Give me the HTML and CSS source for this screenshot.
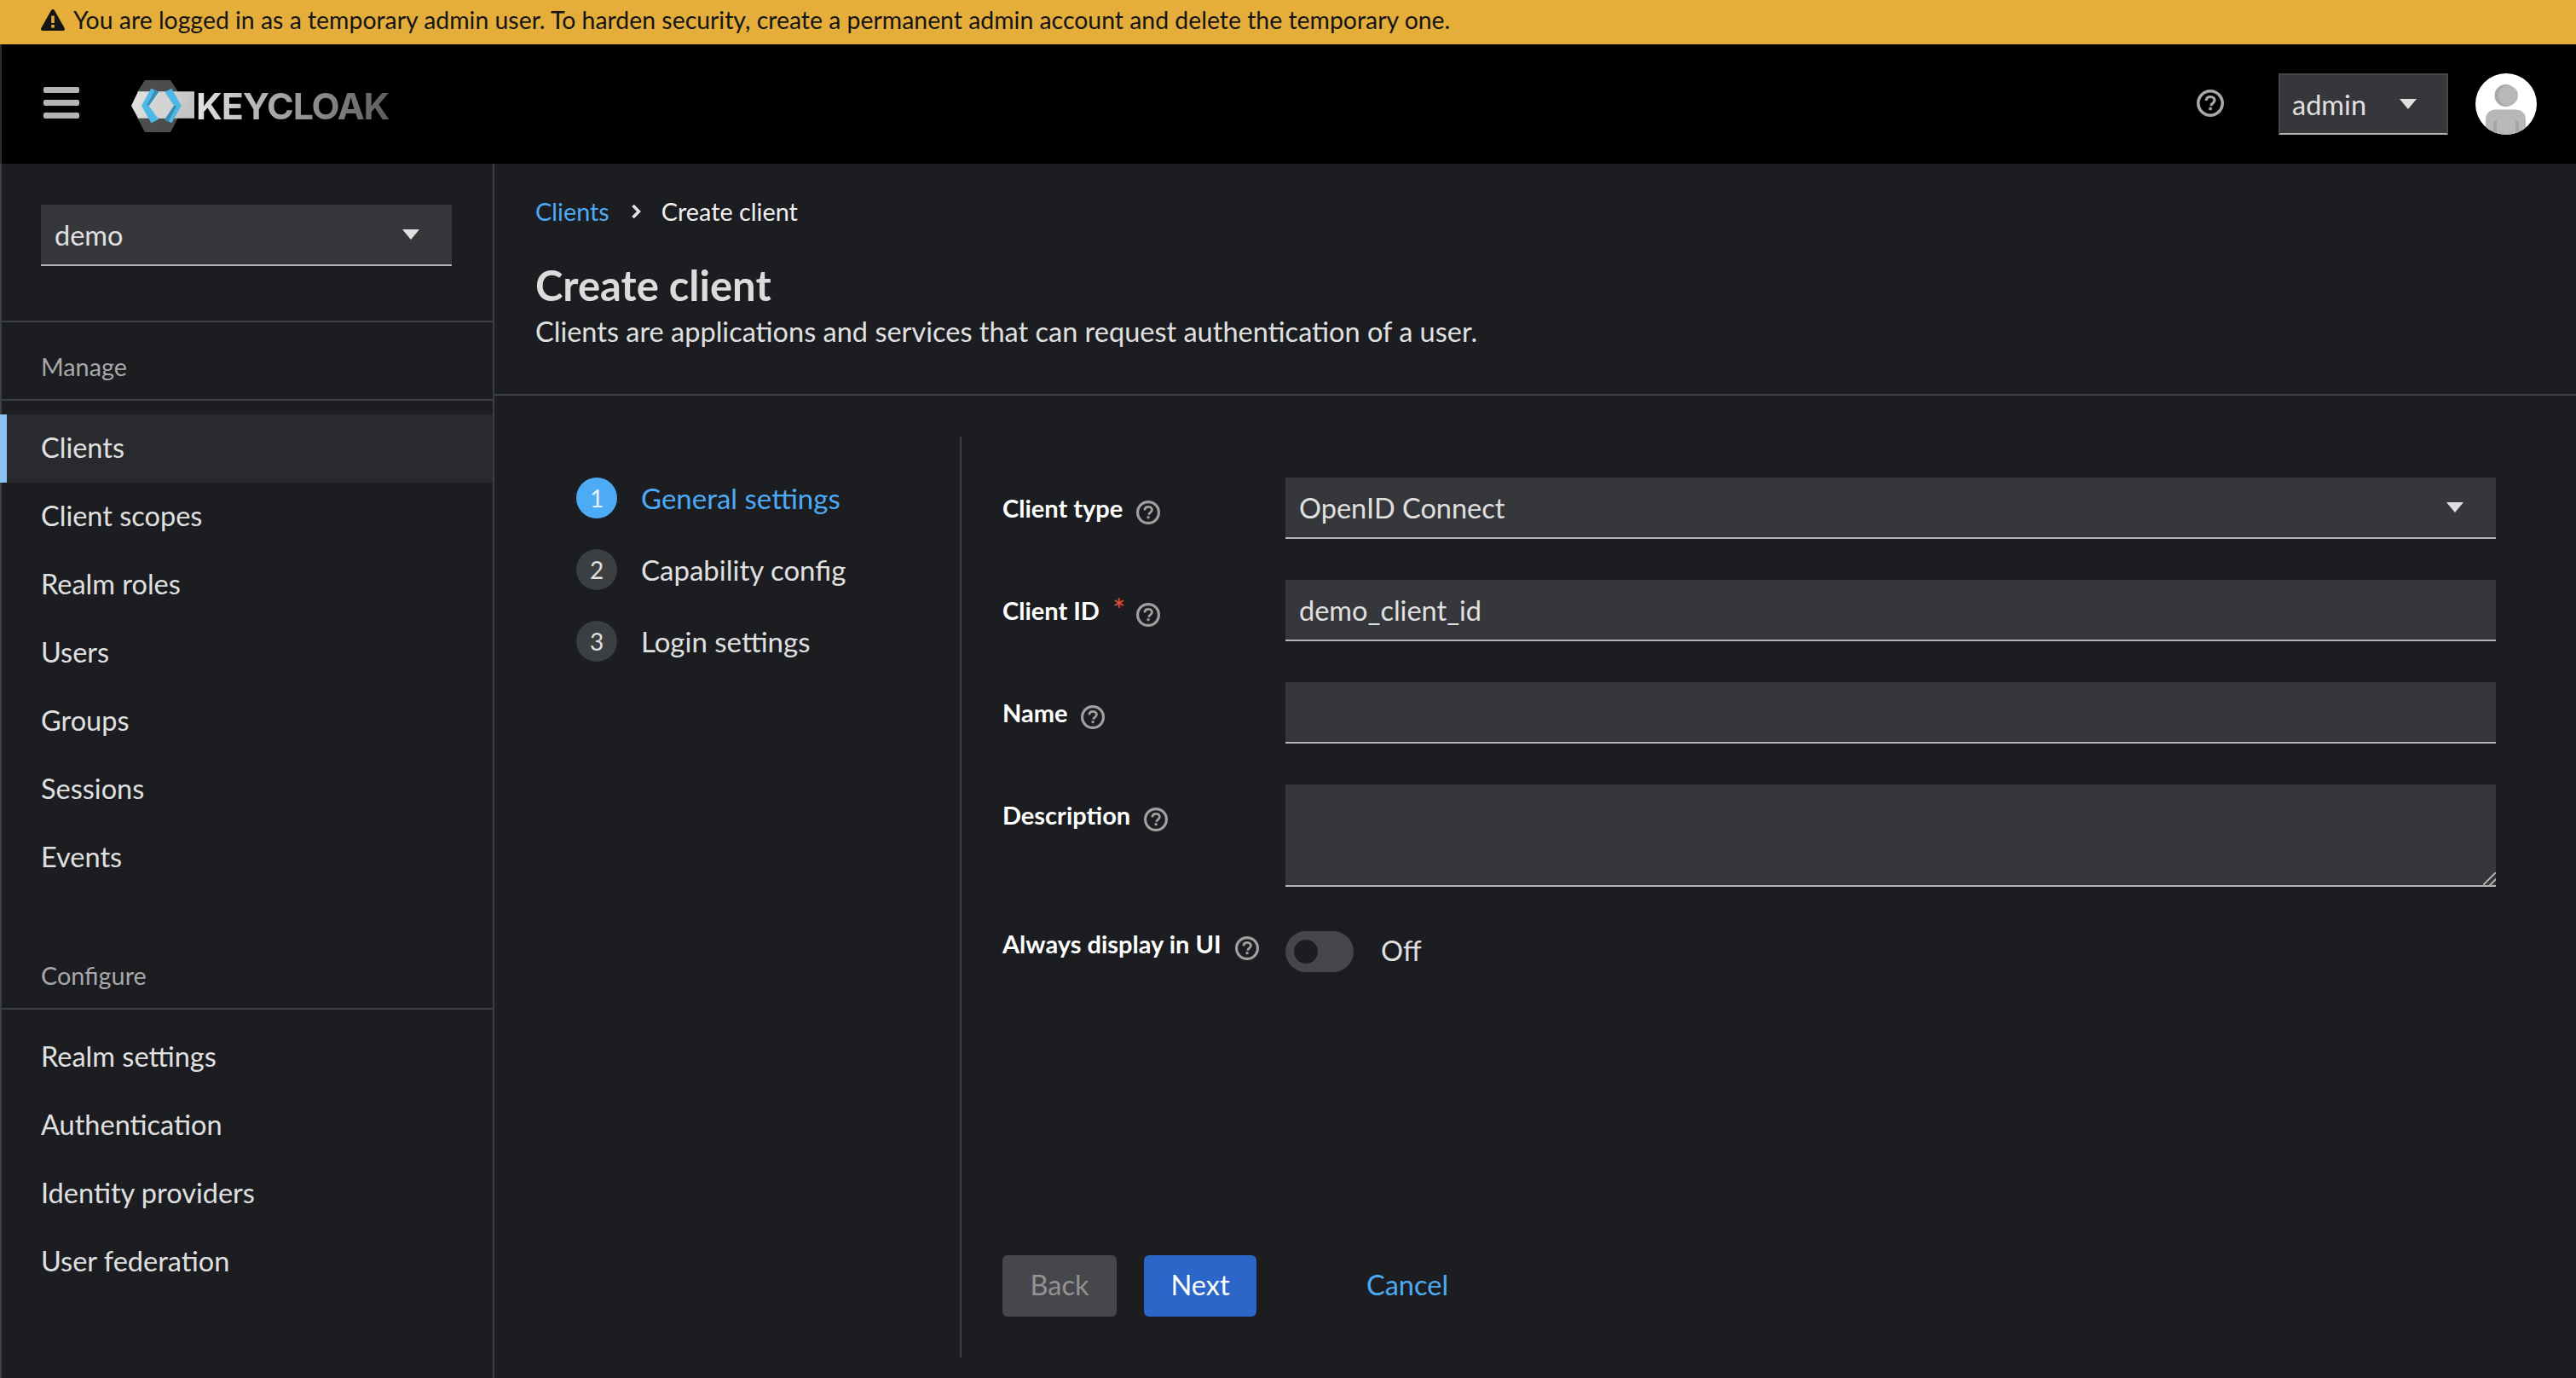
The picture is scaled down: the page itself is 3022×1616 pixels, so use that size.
FILE: index.html
```html
<!DOCTYPE html>
<html lang="en">
<head>
  <meta charset="UTF-8">
  <title>Keycloak - Create client</title>
  <link rel="stylesheet" href="styles.css">
</head>
<body>

  <svg class="sprites" aria-hidden="true">
    <symbol id="help" viewBox="0 0 32 32">
      <circle cx="16" cy="16" r="14.200" fill="none" stroke="currentColor" stroke-width="3.600"/>
      <path d="M11.200 13c.2-2.900 2.200-4.500 4.900-4.500 2.900 0 4.900 1.700 4.900 4.100 0 1.900-1 2.800-2.400 3.700-1.100.7-1.500 1.200-1.500 2.300v.6" fill="none" stroke="currentColor" stroke-width="3.200"/>
      <rect x="14.400" y="20.800" width="3.400" height="3.400" fill="currentColor"/>
    </symbol>
    <symbol id="caret" viewBox="0 0 20 12">
      <path d="M0 0h20L10 12z" fill="currentColor"/>
    </symbol>
  </svg>

  <!-- Temporary admin warning -->
  <div class="banner">
    <svg class="banner-icon" viewBox="0 0 28 25">
      <path d="M14 0c.9 0 1.600.5 2 1.200l11.600 20.600c.8 1.400-.1 3.200-1.800 3.200H2.200C.5 25-.4 23.200.4 21.800L12 1.200C12.400.5 13.100 0 14 0z" fill="#151515"/>
      <rect x="12.200" y="7.500" width="3.600" height="8.500" fill="#e5ae3b"/>
      <rect x="12.200" y="18" width="3.600" height="3.600" fill="#e5ae3b"/>
    </svg>
    <span>You are logged in as a temporary admin user. To harden security, create a permanent admin account and delete the temporary one.</span>
  </div>

  <!-- Masthead -->
  <header class="masthead">
    <div class="burger"><span></span><span></span><span></span></div>
    <div class="logo">
      <svg class="logo-mark" viewBox="0 0 222 183">
        <defs>
          <linearGradient id="band" x1="0" y1="0" x2="1" y2="0.2">
            <stop offset="0" stop-color="#e4e4e4"/>
            <stop offset="1" stop-color="#c4c4c4"/>
          </linearGradient>
        </defs>
        <path d="M48 0h90l26 40v94l-26 49H48L22 134V40z" fill="#4d4d4d"/>
        <path d="M0 90L24 40H222V134H24z" fill="url(#band)"/>
        <path d="M70 90L96 50H140L166 90L140 134H96z" fill="#d4d4d4"/>
        <path d="M36 90L70 29L96 42L62 90L96 138L70 151z" fill="#4eb8e6"/>
        <path d="M54 90L84 33L96 42L62 90z" fill="#3a8db5"/>
        <path d="M176 90L142 29L118 42L150 90L118 138L142 151z" fill="#4eb8e6"/>
        <path d="M150 90H160L130 148L118 138z" fill="#3a8db5"/>
      </svg>
      <span class="logo-text">KEYCLOAK</span>
    </div>
    <div class="masthead-right">
      <svg class="masthead-help"><use href="#help"/></svg>
      <div class="user-menu">
        <span>admin</span>
        <svg class="caret"><use href="#caret"/></svg>
      </div>
      <svg class="avatar" viewBox="0 0 72 72">
        <defs>
          <clipPath id="disc"><circle cx="36" cy="36" r="36"/></clipPath>
        </defs>
        <circle cx="36" cy="36" r="36" fill="#fff"/>
        <g clip-path="url(#disc)">
          <circle cx="35.500" cy="26" r="13" fill="#a9a9a9"/>
          <circle cx="38.500" cy="26" r="11.500" fill="#b8b8b8"/>
          <path d="M12 72V54c0-7 5-11.500 12-11.500h23c7 0 12 4.500 12 11.500v18z" fill="#b8b8b8"/>
          <path d="M21 72V60c0-2 1-3.500 4-4.500v16.500zM51 72V60c0-2-1-3.500-4-4.500v16.500z" fill="#a4a4a4"/>
        </g>
      </svg>
    </div>
  </header>

  <div class="layout">
    <!-- Sidebar -->
    <aside class="sidebar">
      <div class="realm">
        <div class="select realm-select">
          <span>demo</span>
          <svg class="caret"><use href="#caret"/></svg>
        </div>
      </div>
      <div class="nav-title">Manage</div>
      <nav class="nav-list">
        <a class="nav-item active">Clients</a>
        <a class="nav-item">Client scopes</a>
        <a class="nav-item">Realm roles</a>
        <a class="nav-item">Users</a>
        <a class="nav-item">Groups</a>
        <a class="nav-item">Sessions</a>
        <a class="nav-item">Events</a>
      </nav>
      <div class="nav-title configure">Configure</div>
      <nav class="nav-list">
        <a class="nav-item">Realm settings</a>
        <a class="nav-item">Authentication</a>
        <a class="nav-item">Identity providers</a>
        <a class="nav-item">User federation</a>
      </nav>
    </aside>

    <!-- Page -->
    <main class="page">
      <section class="page-head">
        <div class="breadcrumb">
          <a class="link">Clients</a>
          <svg class="crumb-sep" viewBox="0 0 12 18">
            <path d="M2.500 2l7 7-7 7" fill="none" stroke="currentColor" stroke-width="3.600"/>
          </svg>
          <span>Create client</span>
        </div>
        <h1>Create client</h1>
        <p>Clients are applications and services that can request authentication of a user.</p>
      </section>

      <section class="wizard">
        <ol class="steps">
          <li class="step current"><span class="step-num">1</span><span class="step-text">General settings</span></li>
          <li class="step"><span class="step-num">2</span><span class="step-text">Capability config</span></li>
          <li class="step"><span class="step-num">3</span><span class="step-text">Login settings</span></li>
        </ol>

        <form class="form">
          <div class="row">
            <div class="label"><span>Client type</span><svg class="label-help"><use href="#help"/></svg></div>
            <div class="select field">
              <span>OpenID Connect</span>
              <svg class="caret"><use href="#caret"/></svg>
            </div>
          </div>
          <div class="row">
            <div class="label"><span>Client ID</span><em class="required">*</em><svg class="label-help"><use href="#help"/></svg></div>
            <input class="field" type="text" value="demo_client_id">
          </div>
          <div class="row">
            <div class="label"><span>Name</span><svg class="label-help"><use href="#help"/></svg></div>
            <input class="field" type="text">
          </div>
          <div class="row">
            <div class="label"><span>Description</span><svg class="label-help"><use href="#help"/></svg></div>
            <textarea class="field area"></textarea>
          </div>
          <div class="row toggle-row">
            <div class="label"><span>Always display in UI</span><svg class="label-help"><use href="#help"/></svg></div>
            <div class="toggle"><span class="knob"></span></div>
            <span class="toggle-text">Off</span>
          </div>

          <div class="actions">
            <button class="btn back" type="button">Back</button>
            <button class="btn next" type="button">Next</button>
            <a class="link cancel">Cancel</a>
          </div>
        </form>
      </section>
    </main>
  </div>

</body>
</html>
```

FILE: styles.css
```css
* {
  box-sizing: border-box;
}

html, body {
  margin: 0;
  height: 100%;
}

body {
  display: flex;
  flex-direction: column;
  height: 100vh;
  background: #1b1d21;
  color: #e0e0e0;
  font-family: "Lato", "Noto Sans", sans-serif;
  font-size: 32.5px;
  overflow: hidden;
}

.sprites {
  display: none;
}

/* Banner */
.banner {
  height: 52px;
  flex-shrink: 0;
  display: flex;
  align-items: center;
  gap: 10px;
  padding: 0 0 6px 48px;
  background: #e5ae3b;
  color: #151515;
  font-size: 28.4px;
}

.banner-icon {
  width: 28px;
  height: 25px;
}

/* Masthead */
.masthead {
  height: 140px;
  flex-shrink: 0;
  display: flex;
  align-items: center;
  padding-left: 49px;
  background: #000;
  border-left: 2px solid #2c2d30;
}

.burger {
  width: 42px;
  display: flex;
  flex-direction: column;
  gap: 8px;
  margin: 0 61px 3px 0;
}

.burger span {
  height: 7px;
  border-radius: 2px;
  background: #b4b4b4;
}

.logo {
  display: flex;
  align-items: center;
  margin-top: 4px;
}

.logo-mark {
  width: 74px;
  height: 61px;
}

.logo-text {
  margin-left: 2px;
  font-family: "Inter", sans-serif;
  font-weight: 700;
  font-size: 43px;
  letter-spacing: -1.2px;
  line-height: 1;
  background: linear-gradient(90deg, #e4e4e4, #a9a9a9 40%, #5c5c5c);
  -webkit-background-clip: text;
  background-clip: text;
  color: transparent;
}

.masthead-right {
  margin-left: auto;
  display: flex;
  align-items: center;
  padding-right: 46px;
}

.masthead-help {
  width: 32px;
  height: 32px;
  color: #a8a8a8;
  margin: 0 64px 2px 0;
}

.user-menu {
  width: 199px;
  height: 72px;
  display: flex;
  align-items: center;
  padding-left: 14px;
  background: #36373b;
  border: 2px solid #44464a;
  border-bottom-color: #b4b4b4;
  color: #e0e0e0;
}

.user-menu .caret {
  margin-left: 39px;
}

.avatar {
  width: 72px;
  height: 72px;
  margin-left: 32px;
}

.caret {
  width: 20px;
  height: 12px;
  color: #e0e0e0;
  flex-shrink: 0;
}

/* Layout */
.layout {
  flex: 1;
  display: flex;
  min-height: 0;
}

.sidebar {
  width: 580px;
  flex-shrink: 0;
  background: #1b1d21;
  border-left: 2px solid #3c3f42;
  border-right: 2px solid #3c3f42;
}

.realm {
  padding: 48px 48px 64px 46px;
  border-bottom: 2px solid #3c3f42;
}

.select {
  height: 72px;
  display: flex;
  align-items: center;
  justify-content: space-between;
  background: #36373b;
  border-bottom: 2px solid #b4b4b4;
}

.realm-select {
  padding: 0 38px 0 16px;
}

.nav-title {
  height: 92px;
  padding: 35px 0 0 46px;
  border-bottom: 2px solid #3c3f42;
  color: #a8a8a8;
  font-size: 28.8px;
  line-height: 34px;
}

.nav-title.configure {
  margin-top: 46px;
}

.nav-list {
  display: flex;
  flex-direction: column;
  padding-top: 16px;
}

.nav-item {
  height: 80px;
  display: flex;
  align-items: center;
  padding: 0 0 3px 46px;
  color: #e0e0e0;
}

.nav-item.active {
  background: #292a2e;
  margin-left: -2px;
  padding-left: 40px;
  border-left: 8px solid #8cc0f0;
}

/* Page */
.page {
  flex: 1;
  display: flex;
  flex-direction: column;
  min-width: 0;
}

.page-head {
  height: 272px;
  flex-shrink: 0;
  padding: 0 48px;
  border-bottom: 2px solid #3c3f42;
}

.breadcrumb {
  display: flex;
  align-items: center;
  height: 36px;
  margin-top: 38px;
  font-size: 28.8px;
  color: #f0f0f0;
}

.crumb-sep {
  width: 12px;
  height: 18px;
  margin: 0 24px 0 25px;
  color: #e0e0e0;
}

.link {
  color: #4dabf5;
}

.page-head h1 {
  margin: 38px 0 0;
  font-size: 49px;
  line-height: 60px;
  font-weight: 700;
  color: #dcdcdc;
}

.page-head p {
  margin: 2px 0 0;
  line-height: 46px;
  color: #e0e0e0;
}

/* Wizard */
.wizard {
  flex: 1;
  display: flex;
  min-height: 0;
  padding: 48px 0 24px;
}

.steps {
  width: 548px;
  flex-shrink: 0;
  list-style: none;
  margin: 0;
  padding: 48px 0 0 96px;
  border-right: 2px solid #3c3f42;
}

.step {
  height: 48px;
  display: flex;
  align-items: center;
  gap: 28px;
  margin-bottom: 36px;
  font-size: 33px;
  color: #e0e0e0;
}

.step-num {
  width: 48px;
  height: 48px;
  flex-shrink: 0;
  display: flex;
  align-items: center;
  justify-content: center;
  border-radius: 50%;
  background: #3c3f42;
  font-size: 28px;
}

.step.current {
  color: #4dabf5;
}

.step.current .step-num {
  background: #4dabf5;
  color: #e8f2fc;
}

/* Form */
.form {
  flex: 1;
  display: flex;
  flex-direction: column;
  padding: 48px 94px 0 48px;
  min-width: 0;
}

.row {
  display: flex;
  margin-bottom: 48px;
}

.label {
  width: 332px;
  flex-shrink: 0;
  display: flex;
  align-items: center;
  height: 30px;
  margin-top: 20px;
  font-size: 29px;
  font-weight: 700;
  color: #fff;
}

.label-help {
  width: 28px;
  height: 28px;
  margin: 11px 0 0 16px;
  color: #a0a0a0;
}

.required {
  font-style: normal;
  font-weight: 400;
  font-size: 36px;
  line-height: 30px;
  color: #e0503c;
  margin-left: 15px;
  margin-right: -3px;
}

.field {
  flex: 1;
  min-width: 0;
  height: 72px;
  background: #36373b;
  border: 0;
  border-bottom: 2px solid #b4b4b4;
  border-radius: 0;
  color: #e0e0e0;
  font: inherit;
  padding: 0 16px;
  outline: none;
}

.select.field {
  padding-right: 38px;
}

.field.area {
  height: 120px;
  color-scheme: dark;
}

.field.area::-webkit-resizer {
  background: linear-gradient(135deg, transparent 45%, #aaa 45%, #aaa 55%, transparent 55%, transparent 72%, #aaa 72%, #aaa 82%, transparent 82%);
}

.toggle-row {
  align-items: flex-start;
  margin-top: 4px;
  margin-bottom: 0;
}

.toggle-row .label {
  margin-top: -1px;
}

.toggle {
  width: 80px;
  height: 48px;
  display: flex;
  align-items: center;
  padding-left: 10px;
  border-radius: 24px;
  background: #44464a;
}

.knob {
  width: 28px;
  height: 28px;
  border-radius: 50%;
  background: #1b1d21;
}

.toggle-text {
  margin-left: 32px;
  line-height: 46px;
}

/* Actions */
.actions {
  margin-top: auto;
  display: flex;
  align-items: center;
  padding-bottom: 48px;
}

.btn {
  height: 72px;
  border: none;
  border-radius: 6px;
  font: inherit;
  padding: 0 0 3px;
}

.btn.back {
  width: 134px;
  background: #46474a;
  color: #939393;
}

.btn.next {
  width: 132px;
  margin-left: 32px;
  background: #2b66c8;
  color: #fff;
}

.cancel {
  margin: 0 0 3px 129px;
}
```
